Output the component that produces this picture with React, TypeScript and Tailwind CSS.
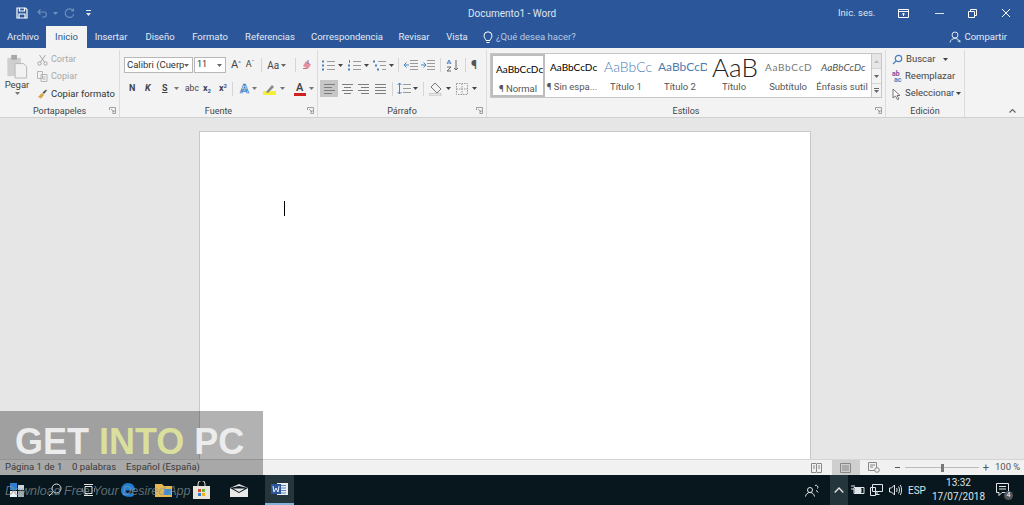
import React from 'react';

const Caret = ({ className = 'text-[#666]' }: { className?: string }) => (
  <svg width="5" height="3" viewBox="0 0 5 3" className={`shrink-0 ${className}`}>
    <path d="M0 0h5L2.5 3z" fill="currentColor" />
  </svg>
);

const Launcher = () => (
  <svg width="7" height="7" viewBox="0 0 7 7" fill="none" stroke="#8a8a8a" strokeWidth="0.8">
    <path d="M0.5 3V.5H6.5V6.5H3.5" />
    <path d="M2 2l3 3M5 3v2H3" />
  </svg>
);

const Group = ({ label, width, children }: { label: string; width: string; children: React.ReactNode }) => (
  <div className={`${width} relative flex h-full shrink-0 flex-col border-r border-[#dcdcdc]`}>
    <div className="min-h-0 flex-1">{children}</div>
    <div className="flex h-[12px] items-center justify-center text-[9px] leading-none text-[#444]">{label}</div>
  </div>
);

const ListIcon = ({ kind }: { kind: 'b' | 'n' | 'm' }) => (
  <svg width="15" height="13" viewBox="0 0 15 13" fill="none">
    <g stroke="#9a9a9a" strokeWidth="1">
      <path d={kind === 'm' ? 'M6 2.5h8M8 6.5h6M10 10.5h4' : 'M6 2.5h8M6 6.5h8M6 10.5h8'} />
    </g>
    {kind === 'b' && <path d="M1 1.5h2v2H1zM1 5.5h2v2H1zM1 9.5h2v2H1z" fill="#4a84bf" />}
    {kind === 'n' && <path d="M2 1h1v3H2zM1 5.5h2v2H1zM1 9.5h2v2H1z" fill="#4a84bf" />}
    {kind === 'm' && <path d="M1 1.5h2v2H1zM3 5.5h2v2H3zM5 9.5h2v2H5z" fill="#4a84bf" />}
  </svg>
);

const AlignIcon = ({ kind }: { kind: 'l' | 'c' | 'r' | 'j' }) => {
  const d = {
    l: 'M1 1.5h11M1 4.5h8M1 7.5h11M1 10.5h8',
    c: 'M1 1.5h11M3 4.5h7M1 7.5h11M3 10.5h7',
    r: 'M1 1.5h11M4 4.5h8M1 7.5h11M4 10.5h8',
    j: 'M1 1.5h11M1 4.5h11M1 7.5h11M1 10.5h11',
  }[kind];
  return (
    <svg width="13" height="12" viewBox="0 0 13 12" fill="none" stroke="#7d7d7d">
      <path d={d} />
    </svg>
  );
};

const styles = [
  { sample: 'AaBbCcDc', label: '¶ Normal', cls: 'pl-[3px] text-[10px] text-black', selected: true },
  { sample: 'AaBbCcDc', label: '¶ Sin espa...', cls: 'pl-[5px] text-[10px] text-black' },
  { sample: 'AaBbCc', label: 'Título 1', cls: 'pl-[5px] text-[14px] font-light text-[#4f7cb3]' },
  { sample: 'AaBbCcD', label: 'Título 2', cls: 'pl-[5px] text-[12px] text-[#4f7cb3]' },
  { sample: 'AaB', label: 'Título', cls: 'pl-[5px] text-[26px] font-light text-[#222]' },
  { sample: 'AaBbCcD', label: 'Subtítulo', cls: 'pl-[4px] text-[10px] tracking-[0.7px] text-[#777]' },
  { sample: 'AaBbCcDc', label: 'Énfasis sutil', cls: 'pl-[6px] text-[10px] italic text-[#555]' },
];

const tabs = ['Insertar', 'Diseño', 'Formato', 'Referencias', 'Correspondencia', 'Revisar', 'Vista'];
const tabGaps = ['w-[48px]', 'w-[50px]', 'w-[50px]', 'w-[70px]', 'w-[84px]', 'w-[50px]', 'w-[36px]'];

export default function App() {
  return (
    <div className="relative flex h-[505px] w-[1024px] flex-col overflow-hidden bg-[#e6e6e6] font-['Roboto',sans-serif] text-[9px] text-[#444]">
      {/* title bar */}
      <div className="flex h-[26px] shrink-0 items-center bg-[#2b579a] text-[#dfe6f1]">
        <div className="flex w-[100px] items-center pl-[16px]">
          <svg width="12" height="12" viewBox="0 0 12 12" fill="none" stroke="#fff" strokeWidth="1.2">
            <path d="M1 1h8.5L11 2.5V11H1z" />
            <path d="M3.5 1v3h5V1M3 11V7h6v4" />
          </svg>
          <svg width="13" height="10" viewBox="0 0 13 10" fill="none" stroke="#6f8fbe" strokeWidth="1.2" className="ml-[9px]">
            <path d="M1 4h7a3 3 0 0 1 0 5H5M3.5 1.5L1 4l2.5 2.5" />
          </svg>
          <Caret className="ml-[3px] text-[#6f8fbe]" />
          <svg width="11" height="11" viewBox="0 0 11 11" fill="none" stroke="#6f8fbe" strokeWidth="1.2" className="ml-[6px]">
            <path d="M9 2.5A4.3 4.3 0 1 0 9.8 6M9.5 .5v2.5H7" />
          </svg>
          <svg width="5" height="6" viewBox="0 0 5 6" className="ml-[11px] text-[#dfe6f1]">
            <path d="M0 0h5v1H0zM0 3h5L2.5 6z" fill="currentColor" />
          </svg>
        </div>
        <div className="ml-[368px] w-[100px] whitespace-nowrap text-[10px]">Documento1 - Word</div>
        <div className="ml-[270px] w-[46px] text-[9.5px]">Inic. ses.</div>
        <svg width="11" height="9" viewBox="0 0 11 9" fill="none" stroke="#fff" className="ml-[14px]">
          <path d="M.5.5h10v8H.5zM.5 2.5h10M5.5 7V4M4 5.5l1.5-1.5L7 5.5" />
        </svg>
        <div className="ml-[26px] h-px w-[9px] bg-[#dfe6f1]" />
        <svg width="9" height="9" viewBox="0 0 9 9" fill="none" stroke="#fff" className="ml-[24px]">
          <path d="M.5 2.5h6v6h-6zM2.5 2.5v-2h6v6h-2" />
        </svg>
        <svg width="10" height="10" viewBox="0 0 10 10" fill="none" stroke="#fff" className="ml-[24px]">
          <path d="M1 1l8 8M9 1l-8 8" />
        </svg>
      </div>

      {/* tabs */}
      <div className="flex h-[22px] shrink-0 items-center bg-[#2b579a] text-[9.5px] text-[#e4eaf4]">
        <div className="flex w-[46px] justify-center">Archivo</div>
        <div className="flex h-full w-[41px] items-center justify-center bg-[#f3f3f3] text-[#2b579a]">Inicio</div>
        {tabs.map((t, i) => (
          <div key={t} className={`flex justify-center ${tabGaps[i]}`}>
            {t}
          </div>
        ))}
        <div className="ml-[8px] flex items-center gap-[3px] text-[#b9c8e0]">
          <svg width="10" height="13" viewBox="0 0 10 13" fill="none" stroke="#fff">
            <path d="M3 9.5C2.5 7.5 1 7 1 4.8a4 4 0 0 1 8 0C9 7 7.5 7.5 7 9.5zM3.5 11.5h3" />
          </svg>
          ¿Qué desea hacer?
        </div>
        <div className="ml-auto mr-[17px] flex items-center gap-[3px] text-[#e4eaf4]">
          <svg width="12" height="12" viewBox="0 0 12 12" fill="none" stroke="#dfe6f1">
            <circle cx="6" cy="4" r="3" />
            <path d="M1 11.5C1.5 8.8 3.5 7.5 6 7.5s4.5 1.3 5 4M8.5 10h3" />
          </svg>
          Compartir
        </div>
      </div>

      {/* ribbon */}
      <div className="flex h-[70px] shrink-0 border-b border-[#d0d0d0] bg-[#f3f3f3] pt-[2px]">
        <Group label="Portapapeles" width="w-[120px]">
          <div className="flex h-full">
            <div className="flex w-[34px] flex-col items-center pt-[4px]">
              <svg width="22" height="25" viewBox="0 0 22 26">
                <path d="M1 4h14v19H1z" fill="#cfcfcf" />
                <path d="M5 1h6v5H5z" fill="#a9a9a9" />
                <path d="M9 10h9l3 3v12H9z" fill="#f2f2f2" stroke="#b5b5b5" />
              </svg>
              <div className="text-[9.5px] leading-[11px]">Pegar</div>
              <Caret className="mt-[2px] text-[#777]" />
            </div>
            <div className="flex flex-col pl-[3px] pt-px leading-none">
              <div className="flex h-[17px] items-center gap-[3px] text-[#a8a8a8]">
                <svg width="11" height="12" viewBox="0 0 11 12" fill="none" stroke="#a5a5a5">
                  <path d="M2.5 1l5 7M8.5 1l-5 7" />
                  <circle cx="2.5" cy="9.5" r="1.7" />
                  <circle cx="8.5" cy="9.5" r="1.7" />
                </svg>
                Cortar
              </div>
              <div className="flex h-[17px] items-center gap-[3px] text-[#a8a8a8]">
                <svg width="11" height="11" viewBox="0 0 11 11" fill="none" stroke="#b5b5b5">
                  <path d="M.5.5h5v7h-5zM4 3.5h6v7H4zM5.5 6h3M5.5 8h3" />
                </svg>
                Copiar
              </div>
              <div className="flex h-[17px] items-center gap-[3px] whitespace-nowrap text-[9.5px] text-[#333]">
                <svg width="11" height="11" viewBox="0 0 11 11">
                  <path d="M1 9l4-4 2 2-3 3.5z" fill="#d9a441" />
                  <path d="M5.5 4.5L9 1.5l1 1-3 3.5z" fill="#555" />
                </svg>
                Copiar formato
              </div>
            </div>
          </div>
          <div className="absolute bottom-[3px] right-[3px]"><Launcher /></div>
        </Group>

        <Group label="Fuente" width="w-[198px]">
          <div className="flex flex-col pl-[4px] pt-[7px]">
            <div className="flex h-[16px] items-center">
              <div className="flex h-[16px] w-[69px] items-center justify-between overflow-hidden whitespace-nowrap border border-[#b8b8b8] bg-white pl-[2px] pr-[3px] text-[9.5px] text-[#333]">
                <span className="w-[57px] overflow-hidden">Calibri (Cuerpo</span>
                <Caret />
              </div>
              <div className="ml-[1px] flex h-[16px] w-[32px] items-center justify-between border border-[#b8b8b8] bg-white px-[2px] pr-[3px] text-[#333]">
                11
                <Caret />
              </div>
              <span className="ml-[5px] text-[11px] text-[#444]">A<sup className="text-[6px] text-[#2b579a]">^</sup></span>
              <span className="ml-[5px] text-[9px] text-[#444]">A<sup className="text-[6px] text-[#2b579a]">ˇ</sup></span>
              <div className="ml-[7px] h-[14px] w-px bg-[#d5d5d5]" />
              <span className="ml-[5px] text-[10px] text-[#444]">Aa</span>
              <Caret className="ml-[2px] text-[#666]" />
              <div className="ml-[9px] h-[14px] w-px bg-[#d5d5d5]" />
              <svg width="12" height="12" viewBox="0 0 12 12" className="ml-[5px]">
                <path d="M5 2l5 3.5-3 4.5L2 7z" fill="#e58fa0" />
                <path d="M2 9.5h4" stroke="#b77" />
                <path d="M7 1v4" stroke="#4a7fc0" />
              </svg>
            </div>
            <div className="mt-[8px] flex h-[15px] items-center text-[#444]">
              <span className="ml-[5px] w-[16px] text-[9px] font-bold leading-none">N</span>
              <span className="w-[16px] text-[9px] font-bold italic leading-none">K</span>
              <span className="ml-[1px] w-[12px] text-[9px] font-bold leading-none underline">S</span>
              <Caret className="text-[#777]" />
              <span className="ml-[6px] w-[18px] text-[8.5px] leading-none">abc</span>
              <span className="w-[16px] text-[9px] font-bold leading-none">x<sub className="text-[6px] text-[#2b579a]">2</sub></span>
              <span className="w-[13px] text-[9px] font-bold leading-none">x<sup className="text-[6px] text-[#2b579a]">2</sup></span>
              <div className="h-[14px] w-px bg-[#d5d5d5]" />
              <span className="ml-[7px] text-[13px] font-bold leading-none text-[#dce9f7] [-webkit-text-stroke:0.7px_#3f7fc4]">A</span>
              <Caret className="ml-[3px] text-[#777]" />
              <svg width="14" height="14" viewBox="0 0 14 14" className="ml-[6px]">
                <path d="M0 9h13v4H0z" fill="#f5ee3a" />
                <path d="M3 10l6-7 2 2-6 6z" fill="#888" />
              </svg>
              <Caret className="ml-[3px] text-[#777]" />
              <div className="ml-[9px] flex flex-col items-center leading-none">
                <span className="text-[11px] font-semibold leading-[11px] text-[#444]">A</span>
                <span className="h-[3px] w-[12px] bg-[#d02020]" />
              </div>
              <Caret className="ml-[3px] text-[#777]" />
            </div>
          </div>
          <div className="absolute bottom-[3px] right-[3px]"><Launcher /></div>
        </Group>

        <Group label="Párrafo" width="w-[169px]">
          <div className="flex flex-col pl-[3px] pt-[7px]">
            <div className="flex h-[16px] items-center">
              <ListIcon kind="b" />
              <Caret className="ml-[2px]" />
              <span className="ml-[4px]"><ListIcon kind="n" /></span>
              <Caret className="ml-[2px]" />
              <span className="ml-[3px]"><ListIcon kind="m" /></span>
              <Caret className="ml-[2px]" />
              <div className="ml-[4px] h-[14px] w-px bg-[#d5d5d5]" />
              <svg width="14" height="12" viewBox="0 0 14 12" fill="none" className="ml-[5px]">
                <path d="M6 1.5h8M6 4.5h8M6 7.5h8M6 10.5h8" stroke="#9a9a9a" />
                <path d="M5 6H0M2.5 3.5L0 6l2.5 2.5" stroke="#4a84bf" />
              </svg>
              <svg width="14" height="12" viewBox="0 0 14 12" fill="none" className="ml-[3px]">
                <path d="M6 1.5h8M6 4.5h8M6 7.5h8M6 10.5h8" stroke="#9a9a9a" />
                <path d="M0 6h5M2.5 3.5L5 6 2.5 8.5" stroke="#4a84bf" />
              </svg>
              <div className="ml-[5px] h-[14px] w-px bg-[#d5d5d5]" />
              <svg width="13" height="13" viewBox="0 0 13 13" fill="none" className="ml-[5px]">
                <path d="M10 1v10M8 9l2 2 2-2" stroke="#666" />
                <path d="M1 5l2-4 2 4M1.5 4h3" stroke="#4a84bf" />
                <path d="M1 8h4L1 12h4" stroke="#666" />
              </svg>
              <div className="ml-[6px] h-[14px] w-px bg-[#d5d5d5]" />
              <span className="ml-[5px] text-[12px] font-semibold leading-none text-[#555]">¶</span>
            </div>
            <div className="mt-[8px] flex h-[15px] items-center">
              <div className="-ml-[1px] flex h-[17px] w-[18px] items-center justify-center bg-[#c6c6c6]"><AlignIcon kind="l" /></div>
              <span className="ml-[3px]"><AlignIcon kind="c" /></span>
              <span className="ml-[3px]"><AlignIcon kind="r" /></span>
              <span className="ml-[4px]"><AlignIcon kind="j" /></span>
              <div className="ml-[5px] h-[14px] w-px bg-[#d5d5d5]" />
              <svg width="14" height="13" viewBox="0 0 14 13" fill="none" className="ml-[4px]">
                <path d="M6 2.5h8M6 6.5h8M6 10.5h8" stroke="#9a9a9a" />
                <path d="M2.5 1v11M.5 3l2-2 2 2M.5 10l2 2 2-2" stroke="#4a84bf" />
              </svg>
              <Caret className="ml-[2px]" />
              <div className="ml-[5px] h-[14px] w-px bg-[#d5d5d5]" />
              <svg width="15" height="14" viewBox="0 0 15 14" className="ml-[5px]">
                <path d="M6 1l6 6-4 4-6-6z" fill="none" stroke="#777" />
                <path d="M0 11.5h12V14H0z" fill="#e8e8e8" stroke="#aaa" strokeWidth="0.5" />
              </svg>
              <Caret className="ml-[2px]" />
              <svg width="13" height="12" viewBox="0 0 13 12" fill="none" className="ml-[5px]">
                <path d="M.5.5h11v11H.5z" stroke="#9a9a9a" strokeDasharray="1.5 1" />
                <path d="M6 .5v11M.5 6h11" stroke="#9a9a9a" strokeDasharray="1.5 1" />
              </svg>
              <Caret className="ml-[3px]" />
            </div>
          </div>
          <div className="absolute bottom-[3px] right-[3px]"><Launcher /></div>
        </Group>

        <Group label="Estilos" width="w-[399px]">
          <div className="flex pl-[3px] pt-[3px]">
            <div className="flex h-[45px] w-[382px] border border-[#c6c6c6] bg-white">
              {styles.map((s) => (
                <div
                  key={s.label}
                  className={`flex h-full w-[54px] shrink-0 flex-col overflow-hidden ${s.selected ? 'border-[2px] border-[#bdbdbd]' : ''}`}
                >
                  <div className={`flex h-[26px] shrink-0 items-center overflow-hidden whitespace-nowrap font-['Lato',sans-serif] leading-none ${s.cls}`}>{s.sample}</div>
                  <div className="whitespace-nowrap text-center text-[9.5px] leading-[14px] text-[#555]">{s.label}</div>
                </div>
              ))}
            </div>
            <div className="flex h-[45px] w-[10px] flex-col border border-l-0 border-[#c6c6c6] bg-[#f3f3f3]">
              <div className="flex h-[15px] items-center justify-center border-b border-[#d5d5d5] bg-[#e6e6e6]"><Caret className="rotate-180 text-[#bbb]" /></div>
              <div className="flex h-[15px] items-center justify-center border-b border-[#d5d5d5]"><Caret /></div>
              <div className="flex flex-1 flex-col items-center justify-center gap-px"><div className="h-px w-[5px] bg-[#666]" /><Caret /></div>
            </div>
          </div>
          <div className="absolute bottom-[3px] right-[3px]"><Launcher /></div>
        </Group>

        <Group label="Edición" width="w-[79px]">
          <div className="flex flex-col pl-[6px] pt-px text-[9.5px] text-[#444]">
            <div className="flex h-[17px] items-center gap-[3px]">
              <svg width="11" height="11" viewBox="0 0 11 11" fill="none" stroke="#4a7fc0" strokeWidth="1.2">
                <circle cx="6.5" cy="4.5" r="3.2" />
                <path d="M4 7L1 10" />
              </svg>
              Buscar
              <Caret className="ml-[5px]" />
            </div>
            <div className="flex h-[17px] items-center gap-[2px]">
              <div className="flex w-[11px] flex-col text-[7px] font-bold leading-[6px]">
                <span className="h-[6px] text-[#7a4fa3]">ab</span>
                <span className="h-[6px] pl-[2px] text-[#4a7fc0]">ac</span>
              </div>
              Reemplazar
            </div>
            <div className="flex h-[17px] items-center gap-[3px]">
              <svg width="10" height="12" viewBox="0 0 10 12" fill="#fff" stroke="#666" strokeWidth="0.9">
                <path d="M1 1l7 6.5H5l2 3.5-1.5.7L3.5 8 1 10z" />
              </svg>
              Seleccionar
              <Caret className="-ml-[1px]" />
            </div>
          </div>
        </Group>

        <div className="flex flex-1 items-end justify-end pb-[4px] pr-[8px]">
          <svg width="7" height="5" viewBox="0 0 7 5" fill="none" stroke="#666" strokeWidth="1.2">
            <path d="M.5 4.5l3-3 3 3" />
          </svg>
        </div>
      </div>

      {/* document */}
      <div className="flex min-h-0 flex-1 justify-center overflow-hidden pr-[14px] pt-[13px]">
        <div className="h-[400px] w-[612px] border border-[#c8c8c8] bg-white pl-[84px] pt-[69px]">
          <div className="h-[15px] w-px bg-black" />
        </div>
      </div>

      {/* status bar */}
      <div className="flex h-[16px] shrink-0 items-center whitespace-nowrap border-t border-[#d4d4d4] bg-[#f1f1f1] text-[9.5px] text-[#555]">
        <span className="ml-[5px] w-[67px]">Página 1 de 1</span>
        <span className="w-[54px]">0 palabras</span>
        <span>Español (España)</span>
        <div className="ml-auto flex h-full items-center">
          <svg width="11" height="10" viewBox="0 0 11 10" fill="none" stroke="#888">
            <path d="M.5.5h4.5l.5.5.5-.5h4.5v9H6l-.5.5L5 9.5H.5zM5.5 1v8M2 3h2M2 5h2M7 3h2M7 5h2" />
          </svg>
          <div className="ml-[10px] flex h-[16px] w-[28px] items-center justify-center bg-[#cfcfcf]">
            <svg width="11" height="10" viewBox="0 0 11 10" fill="none" stroke="#888">
              <path d="M.5.5h10v9H.5zM2 3h7M2 5h7M2 7h7" />
            </svg>
          </div>
          <svg width="12" height="11" viewBox="0 0 12 11" fill="none" stroke="#888" className="ml-[8px]">
            <path d="M.5.5h8v8H.5zM2 3h5M2 5h3" />
            <circle cx="9" cy="8" r="2.3" fill="#f1f1f1" />
          </svg>
          <span className="ml-[15px] h-px w-[5px] bg-[#555]" />
          <div className="relative ml-[5px] flex w-[74px] items-center">
            <div className="h-px w-full bg-[#bbb]" />
            <div className="absolute left-[36px] h-[8px] w-[3px] bg-[#777]" />
          </div>
          <span className="ml-[4px] text-[11px] leading-none">+</span>
          <span className="ml-[6px] mr-[6px] w-[23px] text-right">100 %</span>
        </div>
      </div>

      {/* taskbar */}
      <div className="flex h-[30px] shrink-0 items-center bg-[#08171d] text-[#dfe5e8]">
        <svg width="16" height="16" viewBox="0 0 16 16" className="ml-[10px]">
          <path d="M0 1h7v7H0z" fill="#2f7fd0" />
          <path d="M8 3h6v5H8z" fill="#c5d4dd" />
          <path d="M0 9h7v6H0z" fill="#eef2f4" />
          <path d="M8 9h6v6H8z" fill="#9fb0ba" />
        </svg>
        <svg width="14" height="14" viewBox="0 0 14 14" fill="none" stroke="#e6e6e6" className="ml-[22px]">
          <circle cx="8.5" cy="5.5" r="4.5" />
          <path d="M5 9l-4 4" />
        </svg>
        <svg width="13" height="12" viewBox="0 0 13 12" fill="none" stroke="#e6e6e6" className="ml-[20px]">
          <path d="M3 2.5h7v7H3zM0 4v4M13 4v4M2 .5h9M2 11.5h9" />
        </svg>
        <svg width="16" height="16" viewBox="0 0 16 16" className="ml-[25px]">
          <path d="M1 9C1 4 4 1 8 1c4.5 0 7 3 7 7.5H5.5c.3 3 4.5 4 8 2v3.5c-5 2-12 .5-12.5-5z" fill="#1f7fd6" />
        </svg>
        <svg width="18" height="15" viewBox="0 0 18 15" className="ml-[19px]">
          <path d="M0 1h7l2 2h8v11H0z" fill="#e5b84f" />
          <path d="M9 6h7v6H9z" fill="#3f8fd0" />
        </svg>
        <svg width="17" height="18" viewBox="0 0 17 18" className="ml-[20px]">
          <path d="M0 5h17v13H0z" fill="#e8e4da" />
          <path d="M5 5V3a3.5 3.5 0 0 1 7 0v2" fill="none" stroke="#e8e4da" />
          <path d="M5 8h3v3H5z" fill="#e0492b" />
          <path d="M9 8h3v3H9z" fill="#6cb33f" />
          <path d="M5 12h3v3H5z" fill="#2f7fd0" />
          <path d="M9 12h3v3H9z" fill="#f2b01e" />
        </svg>
        <svg width="18" height="13" viewBox="0 0 18 13" className="ml-[20px]">
          <path d="M0 4L9 0l9 4v9H0z" fill="#e8e8e8" />
          <path d="M0 4l9 5 9-5-9-2z" fill="#08171d" />
          <path d="M3 4.5h12L9 8z" fill="#e8e8e8" />
        </svg>
        <div className="ml-[17px] flex h-full w-[29px] items-center justify-center border-b-2 border-[#7fb2dc] bg-[#25353c]">
          <svg width="17" height="14" viewBox="0 0 17 14">
            <path d="M6 1h11v12H6z" fill="#e8edf2" />
            <path d="M9 3.5h6M9 6h6M9 8.5h6M9 11h6" stroke="#5f86bd" />
            <path d="M0 2h10v10H0z" fill="#2b579a" />
            <path d="M2 4l1 6 2-4 2 4 1-6" fill="none" stroke="#fff" strokeWidth="0.9" />
          </svg>
        </div>
        <div className="ml-auto flex h-full items-center">
          <svg width="14" height="13" viewBox="0 0 14 13" fill="none" stroke="#dfe5e8" className="mr-[11px]">
            <circle cx="5" cy="6" r="2.5" />
            <path d="M.5 12.5c.5-2.5 2-4 4.5-4s4 1.5 4.5 4M10 1.5a2 2 0 0 1 2.5 3M11 6.5c1 .3 1.7 1 2 2" />
          </svg>
          <div className="flex h-full w-[18px] items-center justify-center bg-[#25353c]">
            <svg width="10" height="6" viewBox="0 0 10 6" fill="none" stroke="#e6e6e6" strokeWidth="1.3">
              <path d="M.7 5.5L5 1l4.3 4.5" />
            </svg>
          </div>
          <svg width="14" height="10" viewBox="0 0 14 10" fill="none" stroke="#dfe5e8" className="ml-[3px]">
            <path d="M3 2.5h10v6H3z" />
            <path d="M4 3.5h6v4H4z" fill="#dfe5e8" />
            <path d="M0 4h3M0 1h4" />
          </svg>
          <svg width="13" height="12" viewBox="0 0 13 12" fill="none" stroke="#dfe5e8" className="ml-[5px]">
            <path d="M2.5.5h10v7h-10zM.5 3.5h5v8h-5zM7 7.5v2.5M5.5 10.5h4" />
          </svg>
          <svg width="13" height="12" viewBox="0 0 13 12" fill="none" stroke="#dfe5e8" className="ml-[6px]">
            <path d="M.5 4h2l3-3v10l-3-3h-2zM7.5 4c.7 1 .7 3 0 4M9.5 2.5c1.3 2 1.3 5 0 7M11.3 1c1.800 3 1.800 7 0 10" />
          </svg>
          <span className="ml-[6px] w-[20px] text-[10px]">ESP</span>
          <div className="ml-[8px] flex w-[45px] flex-col items-center text-[10px] leading-[14px]">
            <span>13:32</span>
            <span className="whitespace-nowrap">17/07/2018</span>
          </div>
          <div className="relative ml-[15px] mr-[15px]">
            <svg width="13" height="14" viewBox="0 0 13 14" fill="none" stroke="#e6e6e6">
              <path d="M.5.5h12v9H6l-3 3v-3H.5zM3 3.5h7M3 6h7" />
            </svg>
            <span className="absolute -bottom-[3px] -right-[4px] flex h-[9px] w-[9px] items-center justify-center rounded-full bg-[#555] text-[7px] leading-none text-white">4</span>
          </div>
        </div>
      </div>

      {/* watermark over the page */}
      <div className="absolute left-0 top-[411px] flex h-[64px] w-[263px] bg-black/30 pl-[15px] pt-[8px] font-['Liberation_Sans',sans-serif] text-[36px] font-bold leading-[46px] text-[#ececec]">
        GET&nbsp;<span className="text-[#dbdf9c]">INTO</span>&nbsp;PC
      </div>
      <div className="absolute left-[5px] top-[483px] font-['Liberation_Sans',sans-serif] text-[12.5px] italic leading-[16px] text-[#8a979d]/70">
        Download Free Your Desired App
      </div>
    </div>
  );
}
